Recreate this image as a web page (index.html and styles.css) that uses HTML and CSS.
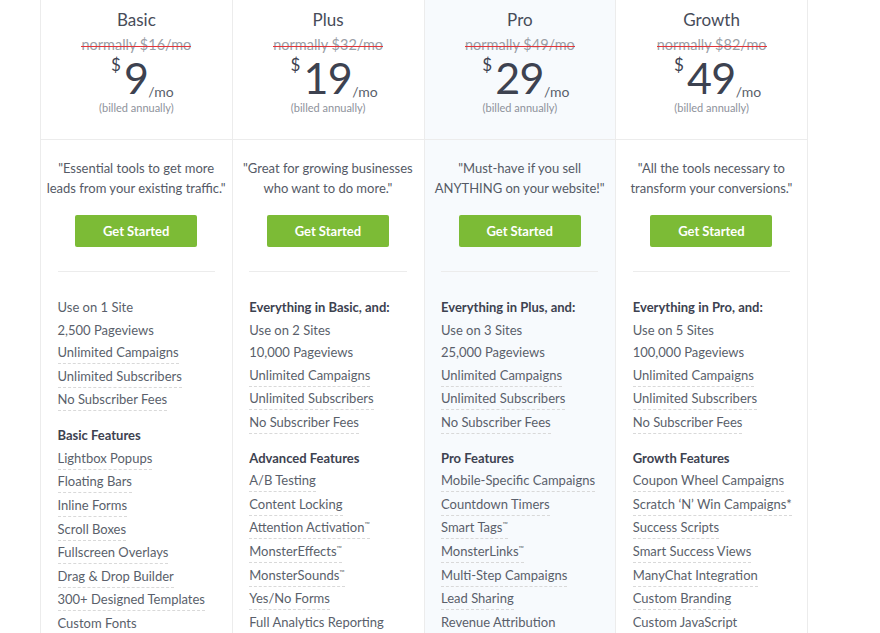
FILE: index.html
```html
<!DOCTYPE html>
<html lang="en">
<head>
  <meta charset="UTF-8">
  <meta name="viewport" content="width=device-width, initial-scale=1.0">
  <title>Pricing</title>
  <link rel="stylesheet" href="styles.css">
</head>
<body>
  <!-- Pricing Table -->
  <div class="pricing">

    <!-- Basic -->
    <div class="plan">
      <div class="plan-head">
        <h2>Basic</h2>
        <div class="normally"><s>normally $16/mo</s></div>
        <div class="price"><span class="cur">$</span><span class="amount">9</span><span class="per">/mo</span></div>
        <div class="billed">(billed annually)</div>
      </div>
      <div class="plan-body">
        <p class="quote">"Essential tools to get more<br>leads from your existing traffic."</p>
        <a href="#" class="btn">Get Started</a>
        <ul class="features">
          <li class="plain"><span>Use on 1 Site</span></li>
          <li class="plain"><span>2,500 Pageviews</span></li>
          <li><span>Unlimited Campaigns</span></li>
          <li><span>Unlimited Subscribers</span></li>
          <li><span>No Subscriber Fees</span></li>
          <li class="group">Basic Features</li>
          <li><span>Lightbox Popups</span></li>
          <li><span>Floating Bars</span></li>
          <li><span>Inline Forms</span></li>
          <li><span>Scroll Boxes</span></li>
          <li><span>Fullscreen Overlays</span></li>
          <li><span>Drag &amp; Drop Builder</span></li>
          <li><span>300+ Designed Templates</span></li>
          <li><span>Custom Fonts</span></li>
        </ul>
      </div>
    </div>

    <!-- Plus -->
    <div class="plan">
      <div class="plan-head">
        <h2>Plus</h2>
        <div class="normally"><s>normally $32/mo</s></div>
        <div class="price"><span class="cur">$</span><span class="amount">19</span><span class="per">/mo</span></div>
        <div class="billed">(billed annually)</div>
      </div>
      <div class="plan-body">
        <p class="quote">"Great for growing businesses<br>who want to do more."</p>
        <a href="#" class="btn">Get Started</a>
        <ul class="features">
          <li class="lead">Everything in Basic, and:</li>
          <li class="plain"><span>Use on 2 Sites</span></li>
          <li class="plain"><span>10,000 Pageviews</span></li>
          <li><span>Unlimited Campaigns</span></li>
          <li><span>Unlimited Subscribers</span></li>
          <li><span>No Subscriber Fees</span></li>
          <li class="group">Advanced Features</li>
          <li><span>A/B Testing</span></li>
          <li><span>Content Locking</span></li>
          <li><span>Attention Activation<sup>™</sup></span></li>
          <li><span>MonsterEffects<sup>™</sup></span></li>
          <li><span>MonsterSounds<sup>™</sup></span></li>
          <li><span>Yes/No Forms</span></li>
          <li><span>Full Analytics Reporting</span></li>
        </ul>
      </div>
    </div>

    <!-- Pro -->
    <div class="plan featured">
      <div class="plan-head">
        <h2>Pro</h2>
        <div class="normally"><s>normally $49/mo</s></div>
        <div class="price"><span class="cur">$</span><span class="amount">29</span><span class="per">/mo</span></div>
        <div class="billed">(billed annually)</div>
      </div>
      <div class="plan-body">
        <p class="quote">"Must-have if you sell<br>ANYTHING on your website!"</p>
        <a href="#" class="btn">Get Started</a>
        <ul class="features">
          <li class="lead">Everything in Plus, and:</li>
          <li class="plain"><span>Use on 3 Sites</span></li>
          <li class="plain"><span>25,000 Pageviews</span></li>
          <li><span>Unlimited Campaigns</span></li>
          <li><span>Unlimited Subscribers</span></li>
          <li><span>No Subscriber Fees</span></li>
          <li class="group">Pro Features</li>
          <li><span>Mobile-Specific Campaigns</span></li>
          <li><span>Countdown Timers</span></li>
          <li><span>Smart Tags<sup>™</sup></span></li>
          <li><span>MonsterLinks<sup>™</sup></span></li>
          <li><span>Multi-Step Campaigns</span></li>
          <li><span>Lead Sharing</span></li>
          <li><span>Revenue Attribution</span></li>
        </ul>
      </div>
    </div>

    <!-- Growth -->
    <div class="plan">
      <div class="plan-head">
        <h2>Growth</h2>
        <div class="normally"><s>normally $82/mo</s></div>
        <div class="price"><span class="cur">$</span><span class="amount">49</span><span class="per">/mo</span></div>
        <div class="billed">(billed annually)</div>
      </div>
      <div class="plan-body">
        <p class="quote">"All the tools necessary to<br>transform your conversions."</p>
        <a href="#" class="btn">Get Started</a>
        <ul class="features">
          <li class="lead">Everything in Pro, and:</li>
          <li class="plain"><span>Use on 5 Sites</span></li>
          <li class="plain"><span>100,000 Pageviews</span></li>
          <li><span>Unlimited Campaigns</span></li>
          <li><span>Unlimited Subscribers</span></li>
          <li><span>No Subscriber Fees</span></li>
          <li class="group">Growth Features</li>
          <li><span>Coupon Wheel Campaigns</span></li>
          <li><span>Scratch ‘N’ Win Campaigns*</span></li>
          <li><span>Success Scripts</span></li>
          <li><span>Smart Success Views</span></li>
          <li><span>ManyChat Integration</span></li>
          <li><span>Custom Branding</span></li>
          <li><span>Custom JavaScript</span></li>
        </ul>
      </div>
    </div>

  </div>
</body>
</html>
```

FILE: styles.css
```css
/* Reset and Global Styles */
* {
  margin: 0;
  padding: 0;
  box-sizing: border-box;
}
html, body {
  height: 100%;
  overflow: hidden;
}
body {
  font-family: Lato, "Open Sans", Arial, sans-serif;
  color: #5a5f6b;
  background-color: #fff;
}

/* Pricing Table */
.pricing {
  display: flex;
  width: 768px;
  min-height: 100%;
  margin-left: 40px;
  border-left: 1px solid #ececec;
}
.plan {
  flex: 1;
  min-width: 0;
  border-right: 1px solid #ececec;
}
.plan.featured {
  background-color: #f7fafd;
}

/* Plan Header */
.plan-head {
  height: 140px;
  padding-top: 10px;
  text-align: center;
  border-bottom: 1px solid #ececec;
}
.plan-head h2 {
  font-size: 17px;
  line-height: 20px;
  font-weight: 400;
  color: #474c59;
}
.plan-head .normally {
  margin-top: 6px;
  font-size: 14.5px;
  line-height: 18px;
  color: #9a9ea6;
}
.plan-head .normally s {
  position: relative;
  text-decoration: none;
}
.plan-head .normally s::after {
  content: "";
  position: absolute;
  left: 0;
  right: 0;
  top: 10px;
  height: 1px;
  background-color: #e3343a;
}
.plan-head .price {
  display: flex;
  justify-content: center;
  align-items: flex-start;
  height: 44px;
  margin-top: 2px;
  padding-left: 12px;
  color: #3d4250;
}
.plan-head .cur {
  font-size: 17px;
  line-height: 18px;
  margin-right: 3px;
}
.plan-head .amount {
  font-size: 43px;
  line-height: 44px;
  letter-spacing: -0.5px;
}
.plan-head .per {
  align-self: flex-end;
  font-size: 14px;
  line-height: 14px;
  color: #5a5f6b;
  margin-bottom: 1px;
}
.plan-head .billed {
  margin-top: 1px;
  font-size: 11px;
  line-height: 14px;
  color: #8e929b;
}

/* Plan Body */
.plan-body {
  padding: 19px 17px 0 16.5px;
}
.quote {
  font-size: 13px;
  line-height: 19.5px;
  text-align: center;
  color: #555a66;
  margin: 0 -16px;
  white-space: nowrap;
}
.btn {
  display: block;
  width: 122px;
  height: 32px;
  margin: 17px auto 0;
  background-color: #7cbb36;
  border-radius: 2px;
  color: #fff;
  font-size: 13px;
  font-weight: 700;
  line-height: 32px;
  text-align: center;
  text-decoration: none;
}
.btn:hover {
  background-color: #6ea92e;
}

/* Feature List */
.features {
  list-style: none;
  margin-top: 24px;
  padding-top: 25px;
  border-top: 1px solid #ececec;
  font-size: 13px;
}
.features li {
  height: 23.6px;
  line-height: 21px;
  white-space: nowrap;
}
.features li.plain,
.features li.lead,
.features li.group {
  height: 22.5px;
}
.features li span {
  display: inline-block;
  border-bottom: 1px dashed #d9d9d9;
}
.features li.plain span {
  border-bottom-color: transparent;
}
.features li.lead,
.features li.group {
  font-weight: 700;
  color: #3d4250;
}
.features li.group {
  margin-top: 12.5px;
}
.features sup {
  font-size: 7px;
  line-height: 0;
  vertical-align: 5px;
}
```
